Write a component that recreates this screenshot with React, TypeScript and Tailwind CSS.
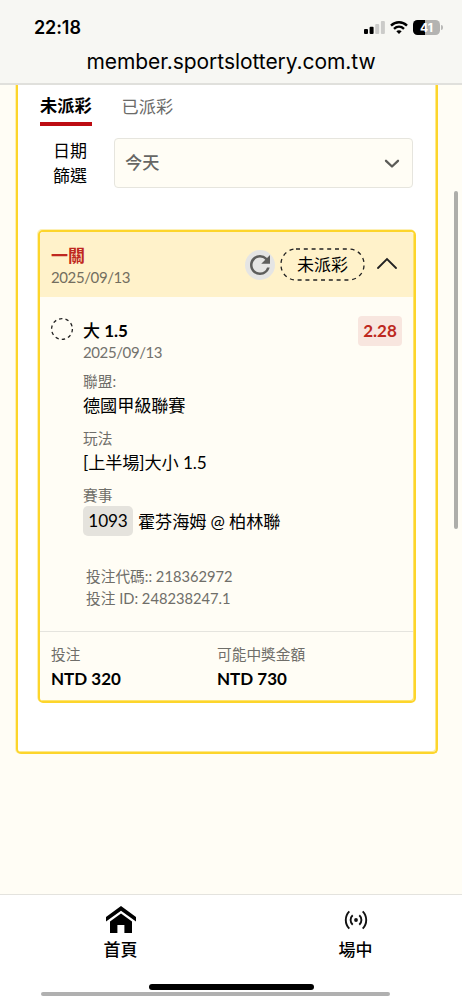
import type { ReactNode } from 'react';
import { MdRefresh } from 'react-icons/md';

interface Bet {
  type: string;
  date: string;
  status: string;
  selection: string;
  line: string;
  odds: string;
  league: string;
  market: string;
  matchNo: string;
  match: string;
  code: string;
  id: string;
  stake: string;
  payout: string;
}

const bet: Bet = {
  type: '一關',
  date: '2025/09/13',
  status: '未派彩',
  selection: '大',
  line: '1.5',
  odds: '2.28',
  league: '德國甲級聯賽',
  market: '[上半場]大小 1.5',
  matchNo: '1093',
  match: '霍芬海姆 @ 柏林聯',
  code: '218362972',
  id: '248238247.1',
  stake: 'NTD 320',
  payout: 'NTD 730',
};

function SignalIcon() {
  return (
    <svg width="21" height="13" viewBox="0 0 21 13">
      <rect x="0" y="8" width="4" height="5" rx="1" fill="#000" />
      <rect x="5.6" y="5.8" width="4" height="7.2" rx="1" fill="#000" />
      <rect x="11.2" y="3" width="4" height="10" rx="1" fill="#cbcbc9" />
      <rect x="16.9" y="0" width="4" height="13" rx="1" fill="#cbcbc9" />
    </svg>
  );
}

function WifiIcon() {
  return (
    <svg width="18" height="13" viewBox="0 0 18 13" fill="none" stroke="#000" strokeWidth="2.4">
      <path d="M1 4.6C5.6.1 12.4.1 17 4.6" />
      <path d="M4 7.8c3-2.8 7-2.8 10 0" />
      <path d="M9 13 6.3 10.2c1.6-1.4 3.8-1.4 5.4 0z" fill="#000" stroke="none" />
    </svg>
  );
}

function Battery() {
  return (
    <div className="flex items-center">
      <div className="flex h-[15px] w-[27px] items-center justify-center rounded-[4.5px] bg-linear-to-r from-black from-43% to-[#b3b3b1] to-43% font-['Inter'] text-[12px] leading-none font-bold text-white">
        41
      </div>
      <div className="ml-px h-[5px] w-[2px] rounded-r-full bg-[#b9b9b7]" />
    </div>
  );
}

function StatusBar() {
  return (
    <header className="h-[85px] shrink-0 border-b-2 border-[#e0e0dc] bg-[#f7f7f3]">
      <div className="flex h-[55px] items-center justify-between pr-[19px] pl-[34px]">
        <span className="font-['Inter'] text-[18px] font-semibold tracking-[-0.1px] text-black">22:18</span>
        <div className="flex items-center gap-[5px]">
          <SignalIcon />
          <WifiIcon />
          <Battery />
        </div>
      </div>
      <div className="-mt-[7px] text-center font-['Inter'] text-[21px] leading-[27px] tracking-[-0.06px] text-black">
        member.sportslottery.com.tw
      </div>
    </header>
  );
}

function Tabs() {
  return (
    <div className="flex gap-[30px] pl-[22px] text-[17.2px] leading-[24px]">
      <div className="h-[33px] border-b-4 border-[#bd0c12] pt-px font-bold text-black">未派彩</div>
      <div className="pt-0.5 text-[#6b6b69]">已派彩</div>
    </div>
  );
}

function DateFilter() {
  return (
    <div className="mt-3 flex pl-[35px]">
      <div className="w-[61px] text-[17px] leading-[25px] text-black">
        <div>日期</div>
        <div>篩選</div>
      </div>
      <div className="flex h-[50px] w-[299px] items-center justify-between rounded-[4px] border border-[#e6e5de] bg-[#fffdf5] pr-3 pl-[10px]">
        <span className="text-[17.2px] font-medium text-[#666664]">今天</span>
        <svg className="mt-0.5" width="16" height="10" viewBox="0 0 16 10" fill="none" stroke="#5c5c58" strokeWidth="2.3" strokeLinecap="round" strokeLinejoin="round">
          <path d="M2 1.8 8 7.5l6-5.7" />
        </svg>
      </div>
    </div>
  );
}

function Field({ label, children }: { label: string; children: ReactNode }) {
  return (
    <div className="mt-[9px]">
      <div className="-mt-px text-[14.7px] leading-[22px] text-[#6f6e69]">{label}</div>
      <div className="mt-px text-[17.2px] leading-[26px] tracking-[-0.12px] text-black">{children}</div>
    </div>
  );
}

function BetCard({ bet }: { bet: Bet }) {
  return (
    <section className="mt-[42px] ml-5 h-[473px] w-[378px] rounded-[5px] border-2 border-[#fdd52b] bg-[#fffdf5] shadow-[-1px_-1px_0_#fdf0b4,inset_-1px_-1px_0_#fde36f]">
      <div className="mr-px flex h-[65px] justify-between rounded-t-[3px] bg-[#fff2ca] pr-4 pl-[11px]">
        <div className="pt-3">
          <div className="text-[17px] leading-[24px] font-bold text-[#bf2820]">{bet.type}</div>
          <div className="text-[15px] leading-[19px] tracking-[-0.4px] text-[#736e5f]">{bet.date}</div>
        </div>
        <div className="flex items-center">
          <div className="flex size-[30px] items-center justify-center rounded-full bg-[#e5e5e4]">
            <MdRefresh className="-ml-px size-[30px] shrink-0 text-[#5e5e5c]" />
          </div>
          <div className="relative ml-[5px] flex h-[33px] w-[85px] items-center justify-center text-[17px] text-black">
            <svg className="absolute inset-0" width="85" height="33" viewBox="0 0 85 33">
              <rect x="1" y="1" width="83" height="31" rx="15" fill="none" stroke="#222" strokeWidth="1.3" strokeDasharray="4 3.8" />
            </svg>
            {bet.status}
          </div>
          <svg className="-mt-1 ml-3" width="20" height="12" viewBox="0 0 20 12" fill="none" stroke="#222" strokeWidth="1.8" strokeLinecap="round">
            <path d="m1 11 9-9 9 9" />
          </svg>
        </div>
      </div>

      <div className="mr-px flex h-[335px] border-b border-[#e5e4de] pr-[11px] pl-[10px]">
        <svg className="mt-5 shrink-0" width="24" height="24" viewBox="0 0 24 24">
          <circle cx="12" cy="12" r="10.4" fill="none" stroke="#222" strokeWidth="1.3" strokeDasharray="3.4 3.13" />
        </svg>
        <div className="ml-[9px] flex-1 pt-[22px]">
          <div className="text-[17px] leading-[24px] font-bold text-black">
            <span className="font-medium">{bet.selection}</span> {bet.line}
          </div>
          <div className="text-[15px] leading-[19px] tracking-[-0.4px] text-[#73726d]">{bet.date}</div>
          <Field label="聯盟:">{bet.league}</Field>
          <Field label="玩法">{bet.market}</Field>
          <Field label="賽事">
            <div className="flex items-center gap-[5px]">
              <span className="-mt-px flex h-[30px] w-[50px] items-center justify-center rounded-[5px] bg-[#e5e3dd]">{bet.matchNo}</span>
              <span>{bet.match}</span>
            </div>
          </Field>
          <div className="mt-[29px] pl-[3px] text-[14.7px] leading-[22px] text-[#6f6e69]">
            <div>投注代碼:: {bet.code}</div>
            <div>投注 ID: {bet.id}</div>
          </div>
        </div>
        <div className="mt-[19px] flex h-[30px] w-[44px] items-center justify-center rounded-[4px] bg-[#f8e6df] text-[17px] font-bold text-[#bd2820]">
          {bet.odds}
        </div>
      </div>

      <div className="flex pt-[11px] pl-[11px]">
        <div className="w-[166px]">
          <div className="text-[14.7px] leading-[22px] text-[#6f6e69]">投注</div>
          <div className="mt-px text-[17px] leading-[26px] font-bold text-black">{bet.stake}</div>
        </div>
        <div>
          <div className="text-[14.7px] leading-[22px] text-[#6f6e69]">可能中獎金額</div>
          <div className="mt-px text-[17px] leading-[26px] font-bold text-black">{bet.payout}</div>
        </div>
      </div>
    </section>
  );
}

function BottomNav() {
  return (
    <nav className="h-[106px] shrink-0 border-t border-[#e4e3de] bg-white">
      <div className="flex h-[89px] pl-[3px] text-[17px] font-medium text-black">
        <div className="flex w-[235px] shrink-0 flex-col items-center pt-[11px]">
          <svg width="30" height="28" viewBox="0 0 30 28" fill="#000">
            <path d="M15 0 30 11v4.5L15 4.7 0 15.5V11z" />
            <path d="M15 7.5 26 15.5V27h-7.6v-8h-7v8H4V15.5z" />
          </svg>
          <span className="mt-1 leading-[24px]">首頁</span>
        </div>
        <div className="flex w-[235px] shrink-0 flex-col items-center pt-[15px]">
          <svg width="24" height="20" viewBox="0 0 24 20" fill="none" stroke="#111" strokeWidth="1.9">
            <circle cx="12" cy="10" r="1.9" fill="#111" stroke="none" />
            <path d="M8.7 5.2a6.5 6.5 0 0 0 0 9.6M15.3 5.2a6.5 6.5 0 0 1 0 9.6" />
            <path d="M5.3 1.3a12.5 12.5 0 0 0 0 17.4M18.7 1.3a12.5 12.5 0 0 1 0 17.4" />
          </svg>
          <span className="mt-2 leading-[24px]">場中</span>
        </div>
      </div>
      <div className="mx-auto h-[6px] w-[165px] rounded-full bg-black" />
      <div className="mt-[2px] ml-[41px] h-[4px] w-[349px] rounded-full bg-[#b0b0b0]" />
    </nav>
  );
}

export default function App() {
  return (
    <div className="relative flex h-[1000px] w-[462px] flex-col overflow-hidden bg-[#fffdf5] font-['Lato','Noto_Sans_CJK_TC',sans-serif]">
      <StatusBar />
      <main className="flex-1">
        <div className="ml-4 h-[669px] w-[422px] rounded-b-[5px] border-x-2 border-b-2 border-[#fdd52b] bg-white pt-2 shadow-[-1px_0_0_#fdf0b4,inset_-1px_-1px_0_#fde98e]">
          <Tabs />
          <DateFilter />
          <BetCard bet={bet} />
        </div>
      </main>
      <BottomNav />
      {/* page scrollbar */}
      <div className="absolute top-[191px] right-[4px] h-[338px] w-[4px] rounded-full bg-[#aeaeaa]" />
    </div>
  );
}
